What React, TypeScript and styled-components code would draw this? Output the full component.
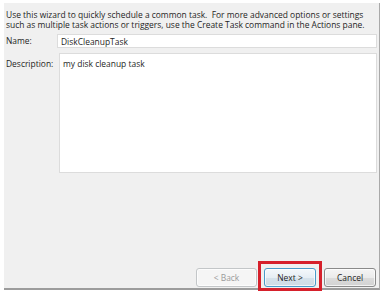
import React from "react";
import styled, { createGlobalStyle } from "styled-components";

const Global = createGlobalStyle`
  html, body { margin: 0; padding: 0; background: #ffffff; }
  body { width: 383px; height: 294px; overflow: hidden; }
  * { box-sizing: border-box; }
`;

const Page = styled.div`
  width: 383px;
  height: 294px;
  padding: 3px 3px 0 4px;
  font-family: "Open Sans", "Noto Sans", sans-serif;
  color: #1e1e1e;
`;

const Panel = styled.div`
  height: 287px;
  background: #f0f0f0;
  border-right: 1px solid #a9a9a9;
  border-bottom: 2px solid #9c9c9c;
  display: flex;
  flex-direction: column;
  padding: 7px 1px 0 2px;
`;

const Intro = styled.p`
  margin: 0;
  font-size: 8.45px;
  line-height: 10px;
  white-space: pre;
`;

const Row = styled.div<{ $top: number }>`
  display: grid;
  grid-template-columns: 51px 1fr;
  align-items: start;
  margin-top: ${(p) => p.$top}px;
  padding-right: 1px;
`;

const Label = styled.label<{ $pad: number }>`
  font-size: 8.45px;
  padding-top: ${(p) => p.$pad}px;
  line-height: 10px;
`;

const TextBox = styled.input`
  height: 14px;
  width: 100%;
  border: 1px solid #dcdcdc;
  background: #ffffff;
  font-family: inherit;
  font-size: 8.45px;
  color: #1e1e1e;
  padding: 0 0 0 3px;
  outline: none;
`;

const TextArea = styled.textarea`
  height: 120px;
  width: calc(100% - 2px);
  margin-left: 2px;
  border: 1px solid #dcdcdc;
  background: #ffffff;
  font-family: inherit;
  font-size: 8.45px;
  line-height: 10px;
  color: #1e1e1e;
  padding: 5px 3px;
  resize: none;
  outline: none;
  overflow: hidden;
`;

const Footer = styled.div`
  margin-top: auto;
  display: flex;
  justify-content: flex-end;
  align-items: flex-end;
  gap: 7px;
  padding: 0 2px 1px 0;
  height: 22px;
`;

const Button = styled.button<{ $kind: "disabled" | "default" | "normal"; $w: number }>`
  width: ${(p) => p.$w}px;
  height: 19px;
  border-radius: 3px;
  font-family: inherit;
  font-size: 8.45px;
  padding: 0;
  position: relative;
  border: 1px solid
    ${(p) => (p.$kind === "disabled" ? "#c3c6c8" : p.$kind === "default" ? "#4a9ac9" : "#8a8a8a")};
  color: ${(p) => (p.$kind === "disabled" ? "#9a9a9a" : "#1e1e1e")};
  background: ${(p) =>
    p.$kind === "disabled"
      ? "#f5f5f5"
      : p.$kind === "default"
      ? "linear-gradient(#f4f8fb 0%, #e6eef4 50%, #d5e2eb 51%, #cfdce6 100%)"
      : "linear-gradient(#f5f5f5 0%, #ebebeb 50%, #dcdcdc 51%, #d2d2d2 100%)"};
  box-shadow: inset 0 0 0 1px rgba(255, 255, 255, 0.7);
`;

const Highlight = styled.div`
  position: relative;
  display: flex;
  margin-right: 1px;
  &::after {
    content: "";
    position: absolute;
    top: -7px;
    bottom: -4px;
    left: -6px;
    right: -6px;
    border: 3px solid #d6202b;
    pointer-events: none;
  }
`;

export default function App() {
  return (
    <>
      <Global />
      <Page>
        <Panel>
          <Intro>
            {"Use this wizard to quickly schedule a common task.  For more advanced options or settings\nsuch as multiple task actions or triggers, use the Create Task command in the Actions pane."}
          </Intro>
          <Row $top={4}>
            <Label $pad={2}>Name:</Label>
            <TextBox readOnly value="DiskCleanupTask" />
          </Row>
          <Row $top={5}>
            <Label $pad={6}>Description:</Label>
            <TextArea readOnly value="my disk cleanup task" />
          </Row>
          <Footer>
            <Button $kind="disabled" $w={61} disabled>
              &lt; Back
            </Button>
            <Highlight>
              <Button $kind="default" $w={52}>
                Next &gt;
              </Button>
            </Highlight>
            <Button $kind="normal" $w={52}>
              Cancel
            </Button>
          </Footer>
        </Panel>
      </Page>
    </>
  );
}
